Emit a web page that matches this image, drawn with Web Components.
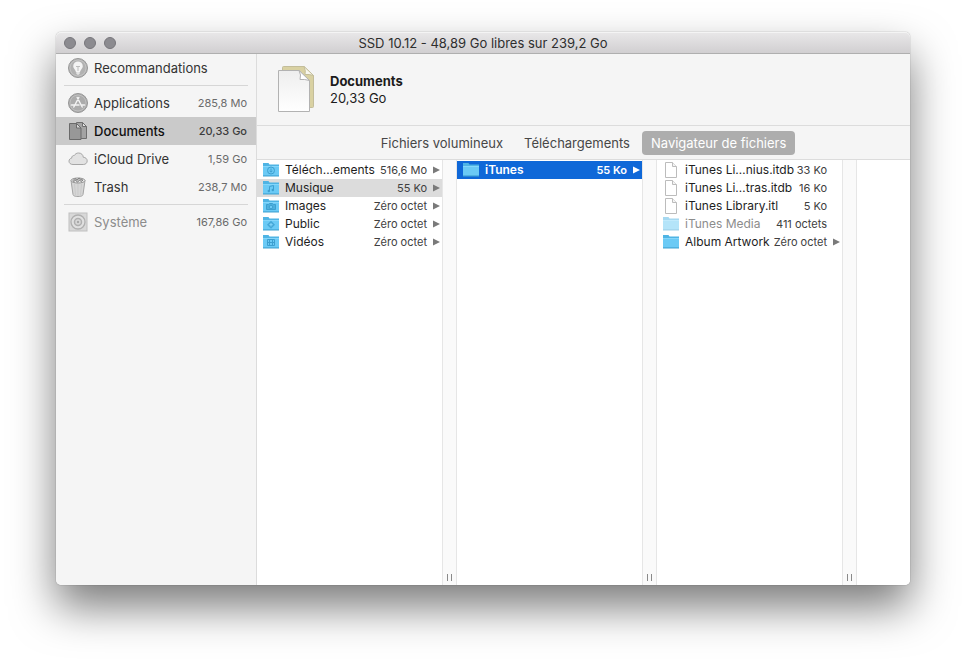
<!DOCTYPE html>
<html lang="fr">
<head>
<meta charset="utf-8">
<title>SSD 10.12</title>
<style>
  html, body { margin: 0; height: 100%; background: #fff; }
  body { font-family: Inter, "Liberation Sans", sans-serif; font-size: 13px; color: #262626; overflow: hidden; }
</style>
</head>
<body>
<disk-window heading="SSD 10.12 - 48,89 Go libres sur 239,2 Go">
  <side-bar slot="sidebar">
    <side-item icon="bulb" label="Recommandations"></side-item>
    <side-rule></side-rule>
    <side-item icon="apps" label="Applications" size="285,8 Mo"></side-item>
    <side-item icon="docs" label="Documents" size="20,33 Go" selected></side-item>
    <side-item icon="cloud" label="iCloud Drive" size="1,59 Go"></side-item>
    <side-item icon="trash" label="Trash" size="238,7 Mo"></side-item>
    <side-rule></side-rule>
    <side-item icon="disk" label="Système" size="167,86 Go" dim></side-item>
  </side-bar>
  <category-header label="Documents" size="20,33 Go"></category-header>
  <view-tabs>
    <view-tab>Fichiers volumineux</view-tab>
    <view-tab>Téléchargements</view-tab>
    <view-tab selected>Navigateur de fichiers</view-tab>
  </view-tabs>
  <column-browser>
    <file-column>
      <file-row icon="down" label="Téléch…ements" size="516,6 Mo" open></file-row>
      <file-row icon="music" label="Musique" size="55 Ko" open state="path"></file-row>
      <file-row icon="camera" label="Images" size="Zéro octet" open></file-row>
      <file-row icon="public" label="Public" size="Zéro octet" open></file-row>
      <file-row icon="film" label="Vidéos" size="Zéro octet" open></file-row>
    </file-column>
    <file-column>
      <file-row icon="folder" label="iTunes" size="55 Ko" open state="active"></file-row>
    </file-column>
    <file-column>
      <file-row icon="file" label="iTunes Li…nius.itdb" size="33 Ko"></file-row>
      <file-row icon="file" label="iTunes Li…tras.itdb" size="16 Ko"></file-row>
      <file-row icon="file" label="iTunes Library.itl" size="5 Ko"></file-row>
      <file-row icon="folder" label="iTunes Media" size="411 octets" state="dim"></file-row>
      <file-row icon="folder" label="Album Artwork" size="Zéro octet" open></file-row>
    </file-column>
  </column-browser>
</disk-window>

<script>
const SIDE_ICONS = {
  bulb: `<circle cx="10" cy="10" r="9.500" fill="#b2b2b2" stroke="#979797"/><circle cx="10" cy="10" r="8" fill="none" stroke="#c4c4c4"/>
    <path d="M10 3.500a4.800 4.800 0 0 0-4.800 4.700c0 2.200 2.300 3.300 2.800 5.800h4c.5-2.500 2.800-3.600 2.800-5.800A4.800 4.800 0 0 0 10 3.500z" fill="#f4f4f4"/>
    <path d="M8.300 14h3.400v1.500l-1 1.200H9.300l-1-1.200z" fill="#e4e4e4"/><path d="M8 8.500h4M10 8.500V13" fill="none" stroke="#bcbcbc"/>`,
  apps: `<circle cx="10" cy="10" r="9.500" fill="#acacac" stroke="#969696"/><circle cx="10" cy="10" r="8" fill="none" stroke="#c0c0c0"/>
    <path d="M10.800 4.500L5.800 14M9.200 4.500l5 9.500M3.500 12h7.500M13 12h3.500" fill="none" stroke="#f2f2f2" stroke-width="1.500" stroke-linecap="round"/>`,
  docs: `<path d="M8.500 1.500h6l4 4v12h-10z" fill="#a3a3a3" stroke="#6e6e6e"/><path d="M14.500 1.500v4h4z" fill="#e2e2e2" stroke="#6e6e6e"/>
    <path d="M1.500 2.500h7l4.500 4.500v11.500H1.500z" fill="#989898" stroke="#6a6a6a"/><path d="M8.500 2.500V7H13z" fill="#d8d8d8" stroke="#6a6a6a"/>`,
  cloud: `<path d="M5 15.500c-2.600 0-4-1.500-4-3.300 0-1.700 1.200-2.900 2.700-3.100C3.600 7.300 4.900 6.300 6.300 6.500 7.200 4.800 8.800 4 10.600 4c2.700 0 4.600 1.900 4.700 4.300 2.200 0 3.900 1.500 3.900 3.600 0 2-1.500 3.600-3.900 3.600z" fill="#e2e2e2" stroke="#a6a6a6"/>`,
  trash: `<path d="M3 3.500l2 14c.2 1.200 1.300 2 5 2s4.800-.8 5-2l2-14z" fill="#d6d6d6" stroke="#a4a4a4"/>
    <path d="M6.500 7l1 11M10 7v11.500M13.500 7l-1 11" stroke="#c9c9c9" fill="none"/>
    <ellipse cx="10" cy="3.500" rx="7" ry="2.500" fill="#ececec" stroke="#949494"/>
    <path d="M5 3.500l2-2 2 1.500 2-2 2 1.500 2 .5-1.500 1.500-2-1-2 1.500-2-1.500-2 1z" fill="#bcbcbc" stroke="#747474" stroke-width=".8"/>`,
  disk: `<rect x="1" y="1" width="18" height="18" fill="#d8d8d8" stroke="#c0c0c0"/><circle cx="10" cy="10" r="7" fill="#e0e0e0" stroke="#b0b0b0" stroke-width="1.300"/>
    <circle cx="10" cy="10" r="3.500" fill="#d8d8d8" stroke="#b0b0b0" stroke-width="1.500"/><circle cx="10" cy="10" r="1.200" fill="#a8a8a8"/>`
};
const FOLDER = `<path d="M0 3V1h5.500l1 1.500H16V14H0z" fill="#4fb4e4"/><path d="M0 4h16v9.500H0z" fill="#6bcaf5"/><path d="M0 14h16" stroke="#43a3d2"/><path d="M0 4.500h16" stroke="#85d6fa"/>`;
const G = 'fill="none" stroke="#3d9fd0"';
const FILE_ICONS = {
  folder: FOLDER,
  down: FOLDER + `<circle cx="8" cy="8.500" r="3.500" ${G}/><path d="M8 6.500v3.500M6.500 8.700L8 10.200l1.500-1.500" ${G}/>`,
  music: FOLDER + `<path d="M6.500 11V6.500l4-1V10" ${G}/><circle cx="5.800" cy="11" r="1.200" fill="#3d9fd0"/><circle cx="9.800" cy="10" r="1.200" fill="#3d9fd0"/>`,
  camera: FOLDER + `<path d="M3.500 6.500h2l1-1h3l1 1h2v5h-9z" fill="#4db0dd" stroke="#3d9fd0"/><circle cx="8" cy="9" r="1.800" fill="#6bcaf5" stroke="#3d9fd0"/>`,
  public: FOLDER + `<path d="M8 4.700l4 4-4 4-4-4z" fill="#45a8d8"/><path d="M8 7v3.400M6.300 8.700h3.400" stroke="#85d6fa"/>`,
  film: FOLDER + `<path d="M4.500 5.500h7v6h-7zM6.500 5.500v6M9.500 5.500v6M4.500 8.500h7" ${G}/>`,
  file: `<path d="M2.500.5h7l4 4v11h-11z" fill="#fff" stroke="#bcbcbc"/><path d="M9.500.5v4h4" fill="#f4f4f4" stroke="#bcbcbc"/>`
};

class Base extends HTMLElement {
  attr(name) { return this.getAttribute(name) || ''; }
  connectedCallback() {
    if (this.shadowRoot) return;
    this.attachShadow({ mode: 'open' }).innerHTML =
      `<style>*{box-sizing:border-box} button{font:inherit;color:inherit;border:0;background:none;margin:0;padding:0;text-align:left}${this.css()}</style>${this.html()}`;
  }
}

customElements.define('disk-window', class extends Base {
  css() { return `
    :host{display:flex;height:100vh;box-sizing:border-box;padding:32px 56px 80px}
    .win{flex:1;min-width:0;display:flex;flex-direction:column;border-radius:5px;
      box-shadow:0 0 1px rgba(0,0,0,.6),0 22px 44px rgba(0,0,0,.52)}
    header{height:22px;flex:none;display:grid;grid-template-columns:1fr auto 1fr;align-items:center;padding:0 8px;
      background:linear-gradient(#e9e8e9,#d1cfd1);border-bottom:1px solid #afafaf;border-radius:5px 5px 0 0;box-shadow:inset 0 1px #f4f4f4}
    .lights{display:flex;gap:8px}
    .lights button{width:12px;height:12px;border-radius:50%;background:#8c8b90;border:1px solid #77767b}
    h1{margin:0;font-size:13px;font-weight:400;line-height:20px;color:#2e2e2e}
    .body{flex:1;min-height:0;display:flex;background:#f5f5f5;border-radius:0 0 5px 5px;overflow:hidden}
    main{flex:1;min-width:0;display:flex;flex-direction:column}`; }
  html() { return `<section class="win"><header><div class="lights"><button aria-label="Fermer"></button><button aria-label="Réduire"></button><button aria-label="Agrandir"></button></div><h1>${this.attr('heading')}</h1></header>
    <div class="body"><slot name="sidebar"></slot><main><slot></slot></main></div></section>`; }
});

customElements.define('side-bar', class extends Base {
  css() { return `:host{display:block;width:201px;flex:none;box-sizing:border-box;border-right:1px solid #dcdcdc}nav{display:flex;flex-direction:column}`; }
  html() { return `<nav><slot></slot></nav>`; }
});

customElements.define('side-rule', class extends Base {
  css() { return `:host{display:block;padding:3px 8px}hr{margin:0;border:0;height:1px;background:#d6d6d6}`; }
  html() { return `<hr>`; }
});

customElements.define('side-item', class extends Base {
  css() { return `
    :host{display:block}
    button{display:flex;align-items:center;width:100%;height:28px;padding:0 9px 0 12px;line-height:20px;color:#333}
    svg{width:20px;height:20px;flex:none;margin-right:6px}
    .name{flex:1}
    .size{font-size:11px;color:#6b6b6b}
    :host([selected]) button{background:#cacaca;color:#111;font-weight:500}
    :host([selected]) .size{color:#3c3c3c}
    :host([dim]) .name{color:#8c8c8c}`; }
  html() { return `<button><svg viewBox="0 0 20 20" aria-hidden="true">${SIDE_ICONS[this.attr('icon')]}</svg><span class="name">${this.attr('label')}</span><span class="size">${this.attr('size')}</span></button>`; }
});

customElements.define('category-header', class extends Base {
  css() { return `
    :host{display:flex;align-items:center;height:72px;flex:none;box-sizing:border-box;padding:0 20px;gap:15px;border-bottom:1px solid #dcdcdc}
    svg{width:38px;height:48px;flex:none}
    h2,p{margin:0;font-size:13px;line-height:17px;color:#1c1c1c}
    h2{font-weight:700}`; }
  html() { return `<svg viewBox="0 0 38 48" aria-hidden="true">
      <defs><linearGradient id="p" x1="0" y1="0" x2="0" y2="1"><stop offset="0" stop-color="#eeeeee"/><stop offset="1" stop-color="#fff"/></linearGradient></defs>
      <path d="M5.500 1.500q0-1 1-1h20.500l9.500 9v31q0 1-1 1h-30z" fill="#d9d1a2" stroke="#c3bd9a"/>
      <path d="M27 .5q2 4 1 8 4-.5 8.500 1z" fill="#f8f7ee" stroke="#c3bd9a"/>
      <path d="M1.500 4.500h20.500l10.500 10v31.000H1.500z" fill="url(#p)" stroke="#b2b2b2"/>
      <path d="M22 4.500q2.500 4.500 1 9 4.500-.5 9.500 1z" fill="#fff" stroke="#b2b2b2"/></svg>
    <div><h2>${this.attr('label')}</h2><p>${this.attr('size')}</p></div>`; }
});

customElements.define('view-tabs', class extends Base {
  css() { return `:host{display:flex;justify-content:center;align-items:center;gap:3px;height:34px;flex:none;box-sizing:border-box;border-bottom:1px solid #dcdcdc}`; }
  html() { return `<slot></slot>`; }
});

customElements.define('view-tab', class extends Base {
  css() { return `:host{display:block}
    button{display:block;height:24px;padding:0 9px;line-height:24px;border-radius:4px;color:#474747;white-space:nowrap}
    :host([selected]) button{background:#adadad;color:#fff;}`; }
  html() { return `<button role="tab" aria-selected="${this.hasAttribute('selected')}"><slot></slot></button>`; }
});

customElements.define('column-browser', class extends Base {
  css() { return `:host{display:flex;flex:1;min-height:0;background:#fff;overflow:hidden}`; }
  html() { return `<slot></slot>`; }
});

customElements.define('file-column', class extends Base {
  css() { return `
    :host{display:flex;width:200px;flex:none}
    .list{flex:1;min-width:0;padding-top:1px}
    .grip{width:15px;flex:none;display:flex;justify-content:center;align-items:flex-end;gap:3px;padding-bottom:4px;background:#fafafa;border:solid #e6e6e6;border-width:0 1px}
    i{width:1px;height:7px;background:#8a8a8a}`; }
  html() { return `<div class="list"><slot></slot></div><div class="grip"><i></i><i></i></div>`; }
});

customElements.define('file-row', class extends Base {
  css() { return `
    :host{display:block}
    button{display:flex;align-items:center;width:100%;height:18px;padding:0 2px 0 6px;font-size:12px;line-height:18px;white-space:nowrap;color:#1e1e1e}
    .icon{width:16px;height:16px;flex:none;margin-right:6px}
    .name{flex:1;min-width:0}
    .size{font-size:11px;color:#404040}
    .arrow{width:7px;height:8px;flex:none;margin-left:6px;fill:#7a7a7a}
    :host([state=path]) button{background:#dcdcdc}
    :host([state=active]) button{background:#0f68d8;color:#fff;font-weight:600}
    :host([state=active]) .size{color:#fff}
    :host([state=active]) .arrow{fill:#fff}
    :host([state=dim]) .icon{opacity:.5}
    :host([state=dim]) .name{color:#8c8c8c}`; }
  html() { return `<button><svg class="icon" viewBox="0 0 16 16" aria-hidden="true">${FILE_ICONS[this.attr('icon')]}</svg><span class="name">${this.attr('label')}</span><span class="size">${this.attr('size')}</span><svg class="arrow" viewBox="0 0 7 8" aria-hidden="true">${this.hasAttribute('open') ? '<path d="M0 0.500l7 3.500-7 3.500z"/>' : ''}</svg></button>`; }
});
</script>
</body>
</html>
